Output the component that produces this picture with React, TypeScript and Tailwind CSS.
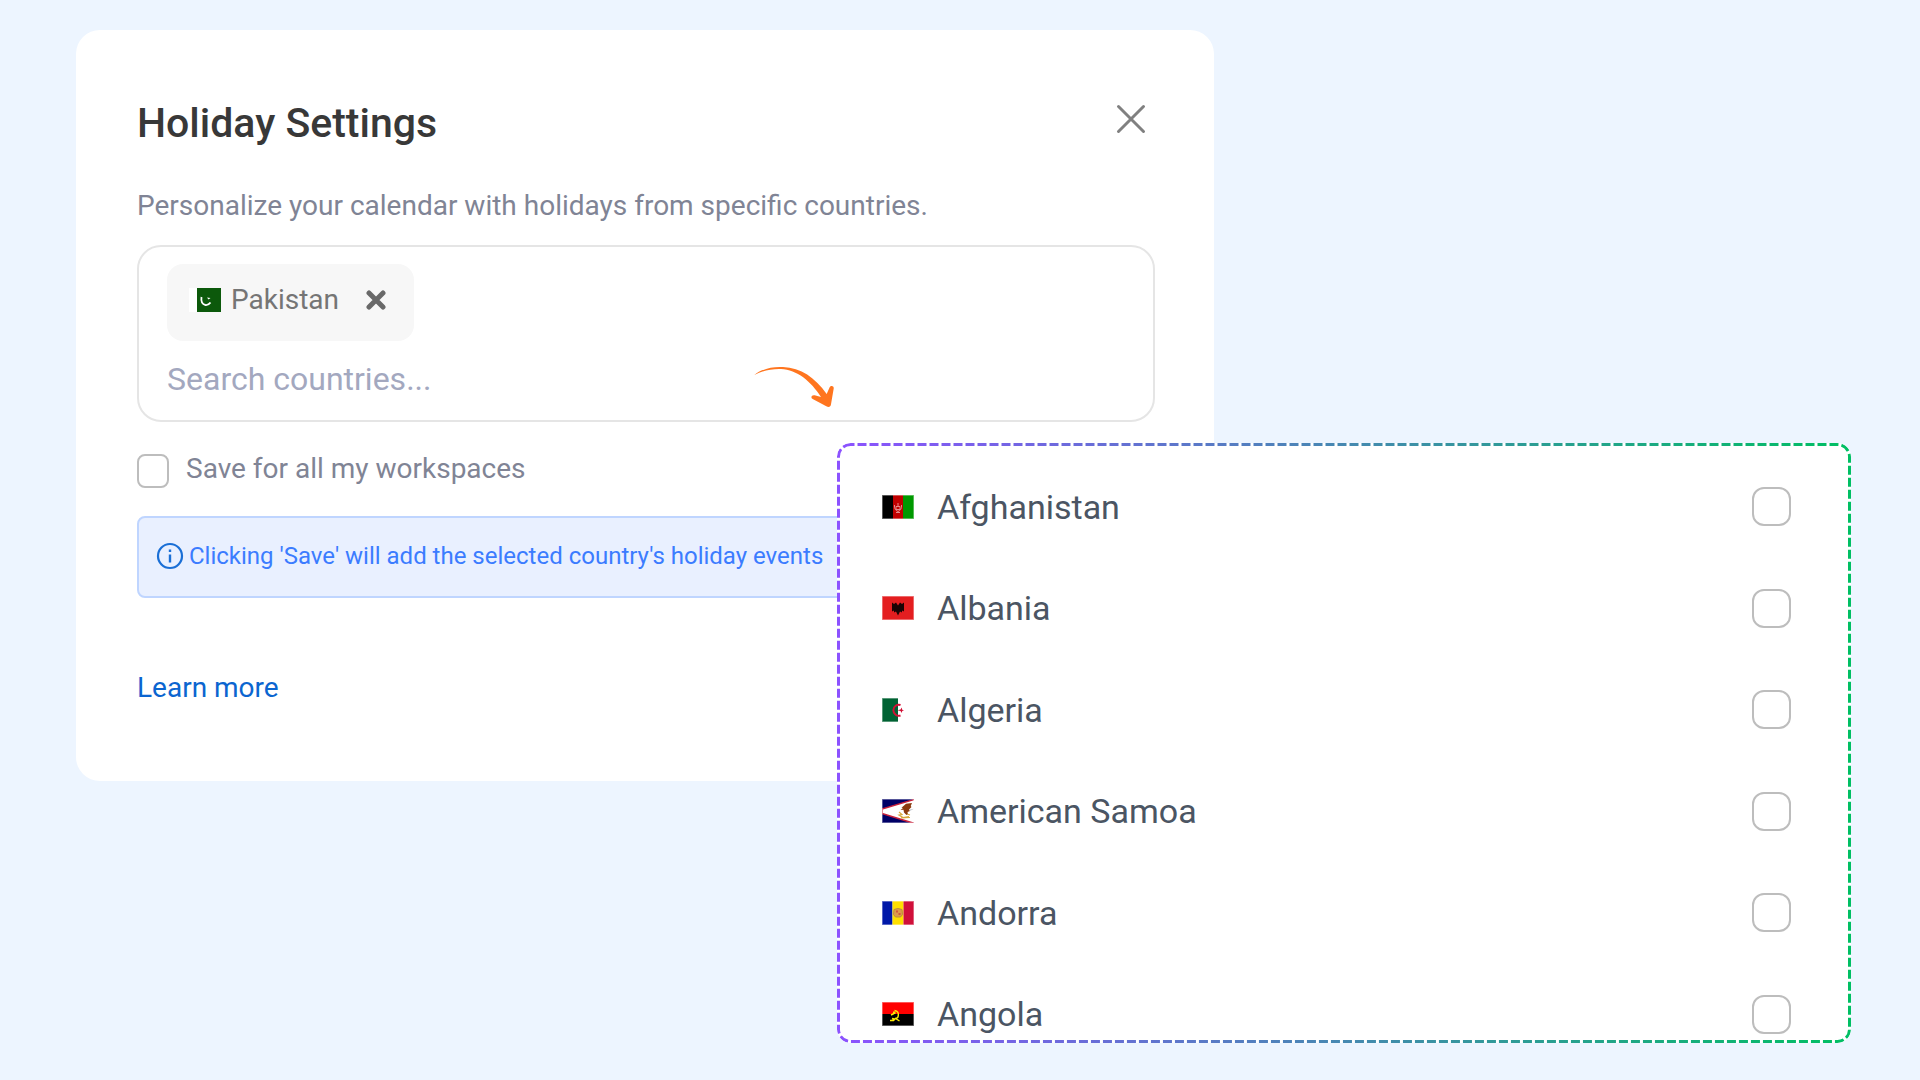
import { useId, useState } from "react";
import type { ReactNode } from "react";

const AfghanistanFlag = (
  <>
    <path fill="#000" d="M0 0h11v24H0z" />
    <path fill="#c00000" d="M11 0h10v24H11z" />
    <path fill="#009900" d="M21 0h11v24H21z" />
    <path
      d="M12.500 10q-.500 5 3.500 6.500q4-1.500 3.500-6.500M14 11.500h4v3h-4zM16 8v3M14 17.500h4"
      fill="none"
      stroke="#e58a8a"
      strokeWidth="1"
    />
  </>
);

const AlbaniaFlag = (
  <>
    <path fill="#e41e20" d="M0 0h32v24H0z" />
    <path
      fill="#1a0304"
      d="M10 6.500l2 1.500 2-1.500 2 3 2-3 2 1.500 2-1.500v9l-2-1v2l-2-1-2 4-2-4-2 1v-2l-2 1z"
    />
  </>
);

const AlgeriaFlag = (
  <>
    <path fill="#fff" d="M16 0h16v24H16z" />
    <path fill="#006233" d="M0 0h16v24H0z" />
    <path
      d="M18.500 7a5.500 5.500 0 1 0 0 10.500"
      fill="none"
      stroke="#d21034"
      strokeWidth="2"
    />
    <path fill="#d21034" d="M15.500 12.300l3-.8 1.300-2 .4 2.200 1.800.6-1.800.6-.4 2.200-1.300-2z" />
  </>
);

const AmericanSamoaFlag = (
  <>
    <path fill="#000066" d="M0 0h32v24H0z" />
    <path fill="#fff" stroke="#c8203a" strokeWidth="1.500" d="M34 0L0 10v4.500L34 25z" />
    <path
      fill="#8b3a0e"
      d="M30 4l-6 .7-4.500 4 1.500.3-2.500 2 3-.2.500 2.700 2.500 2.500 1.500-1-.5-2 2.500-1-1-1.500 2.500-2.500-.8-1z"
    />
    <path
      d="M17 13l3 2.500-3 .5 4 2.500 6-1M19 19l9-.5M25 15l3 1"
      fill="none"
      stroke="#d6a93c"
      strokeWidth="1.200"
    />
    <path fill="#c9ccd2" d="M27 10.500l5-.8-4 2.300z" />
  </>
);

const AndorraFlag = (
  <>
    <path fill="#0018a8" d="M0 0h10.500v24H0z" />
    <path fill="#fedf00" d="M10.500 0h11v24h-11z" />
    <path fill="#d0103a" d="M21.500 0H32v24H21.500z" />
    <path
      fill="#dd9a4a"
      stroke="#b98f3c"
      strokeWidth="1"
      d="M12 8.500q4-2 8 0l.5 5-2 2.500h-5l-2-2.500z"
    />
    <path fill="#d0573a" d="M14 9.500h2v2h-2zM16.500 12h2v2h-2z" />
  </>
);

const AngolaFlag = (
  <>
    <path fill="#ff0000" d="M0 0h32v12H0z" />
    <path fill="#000" d="M0 12h32v12H0z" />
    <path
      d="M12.500 8.500q5 .5 3.500 6.500q-2 3-6 1.500M9 13l3-1.500M8 18.500h3.500l2-2 4 2.500"
      fill="none"
      stroke="#ffec00"
      strokeWidth="1.400"
    />
    <path fill="#ffec00" d="M11 9.500h2.500v2.500H11z" />
  </>
);

function Flag({ children }: { children: ReactNode }) {
  return (
    <svg viewBox="0 0 32 24" className="h-6 w-8 shrink-0" aria-hidden="true">
      {children}
      <path d="M0 0h32v24H0z" fill="none" stroke="#fff" strokeOpacity=".45" strokeWidth="1.500" />
    </svg>
  );
}

const countries: { name: string; flag: ReactNode }[] = [
  { name: "Afghanistan", flag: AfghanistanFlag },
  { name: "Albania", flag: AlbaniaFlag },
  { name: "Algeria", flag: AlgeriaFlag },
  { name: "American Samoa", flag: AmericanSamoaFlag },
  { name: "Andorra", flag: AndorraFlag },
  { name: "Angola", flag: AngolaFlag },
];

function DashedOutline() {
  const id = useId();
  return (
    <svg className="pointer-events-none absolute inset-0 h-full w-full" aria-hidden="true">
      <defs>
        <linearGradient id={id} x1="0" x2="1" y1="0" y2="0">
          <stop offset="0" stopColor="#8c52ff" />
          <stop offset="1" stopColor="#00bf63" />
        </linearGradient>
      </defs>
      <rect
        x="1.5"
        y="1.5"
        rx="12"
        className="h-[calc(100%-3px)] w-[calc(100%-3px)]"
        fill="none"
        stroke={`url(#${id})`}
        strokeWidth="3"
        strokeDasharray="9 3"
        strokeDashoffset="5"
      />
    </svg>
  );
}

function CountryMenu() {
  return (
    <div className="absolute top-[443px] right-[69px] left-[837px] h-[600px] overflow-hidden rounded-[14px] bg-white">
      <ul className="mt-[13px] grid h-[609px] grid-rows-6 pr-[60px] pl-[45px]">
        {countries.map(({ name, flag }) => (
          <li key={name}>
            <label className="flex h-full items-center">
              <Flag>{flag}</Flag>
              <span className="ml-[23px] flex-1 text-[34px] leading-10 text-[#4b5563]">{name}</span>
              <input
                type="checkbox"
                className="size-[39px] appearance-none rounded-xl border-2 border-[#bdbdbd] bg-white checked:bg-[#8c52ff]"
              />
            </label>
          </li>
        ))}
      </ul>
      <DashedOutline />
    </div>
  );
}

function Arrow() {
  return (
    <svg
      viewBox="40 45 249 129"
      className="absolute top-[365px] left-[753px] h-[43px] w-[83px]"
      fill="#ff751f"
      aria-hidden="true"
    >
      <path d="M44 75C66 57 98 49 130 51C184 54 226 82 261 132L270 112C273 105 284 107 282 116L274 163C273 171 267 173 260 169L219 147C211 142 217 134 225 136L244 141C214 94 172 59 124 57C96 56 68 62 44 75Z" />
    </svg>
  );
}

export default function App() {
  const [selected, setSelected] = useState(true);
  return (
    <main className="relative min-h-screen overflow-hidden bg-[#edf5ff] pt-[30px] pl-[76px] font-['Roboto',sans-serif]">
      <section className="w-full max-w-[1138px] rounded-3xl bg-white pt-[69px] pr-[59px] pb-[77px] pl-[61px]">
        <header className="flex items-start justify-between">
          <h1 className="text-[41px] leading-[48px] font-medium text-[#383838]">Holiday Settings</h1>
          <button type="button" aria-label="Close" className="mr-2">
            <svg viewBox="0 0 32 38" className="h-[38px] w-8" aria-hidden="true">
              <path d="M3.500 7.500l25 25M28.500 7.500l-25 25" stroke="#808080" strokeWidth="3" strokeLinecap="round" />
            </svg>
          </button>
        </header>
        <p className="mt-[43px] text-[28px] leading-8 text-[#808495]">
          Personalize your calendar with holidays from specific countries.
        </p>
        <div className="mt-[23px] rounded-3xl border-2 border-[#e5e5e5] px-7 pt-[17px] pb-[21px]">
          <div className="flex h-[77px]">
            {selected && (
              <div className="flex items-center rounded-2xl bg-[#f7f7f7] pr-7 pb-[6px] pl-[22px]">
                <svg viewBox="0 0 32 24" className="h-6 w-8" aria-hidden="true">
                  <path fill="#fff" d="M0 0h8v24H0z" />
                  <path fill="#0c590b" d="M8 0h24v24H8z" />
                  <path d="M12.500 9q-1 7 4 8q3 .3 5-2.500" fill="none" stroke="#fff" strokeWidth="1.800" />
                  <path fill="#fff" d="M18 9.500l3.500.5-2 1.500z" />
                </svg>
                <span className="ml-[10px] text-[28px] leading-8 text-[#757575]">Pakistan</span>
                <button
                  type="button"
                  aria-label="Remove Pakistan"
                  className="ml-[27px]"
                  onClick={() => setSelected(false)}
                >
                  <svg viewBox="0 0 20 20" className="size-5" aria-hidden="true">
                    <path d="M3 3l14 14M17 3L3 17" stroke="#696969" strokeWidth="5" strokeLinecap="round" />
                  </svg>
                </button>
              </div>
            )}
          </div>
          <input
            type="text"
            aria-label="Search countries"
            placeholder="Search countries..."
            className="mt-[18px] block h-10 w-full text-[32px] leading-10 text-[#333333] outline-none placeholder:text-[#a3a8bf]"
          />
        </div>
        <label className="mt-[31px] flex items-start">
          <input
            type="checkbox"
            className="mt-px h-[34px] w-8 appearance-none rounded-lg border-2 border-[#bdbdbd] bg-white checked:bg-[#8c52ff]"
          />
          <span className="ml-[17px] text-[28px] leading-8 text-[#808495]">Save for all my workspaces</span>
        </label>
        <div className="mt-7 flex h-[82px] items-start gap-[5px] rounded-lg border-2 border-[#bfd5ff] bg-[#e9f0ff] pt-[22px] pl-[17px]">
          <svg viewBox="0 0 28 32" className="h-8 w-7" aria-hidden="true">
            <circle cx="14" cy="16" r="12" fill="none" stroke="#1a6fd6" strokeWidth="2.200" />
            <path d="M14 14.500v8M14 9.500v2.500" stroke="#1a6fd6" strokeWidth="2.400" />
          </svg>
          <p className="text-2xl leading-8 text-[#3b7cff]">
            Clicking 'Save' will add the selected country's holiday events
          </p>
        </div>
        <a href="#learn-more" className="mt-[74px] block w-fit text-[28px] leading-8 text-[#0b65d0]">
          Learn more
        </a>
      </section>
      <Arrow />
      <CountryMenu />
    </main>
  );
}
